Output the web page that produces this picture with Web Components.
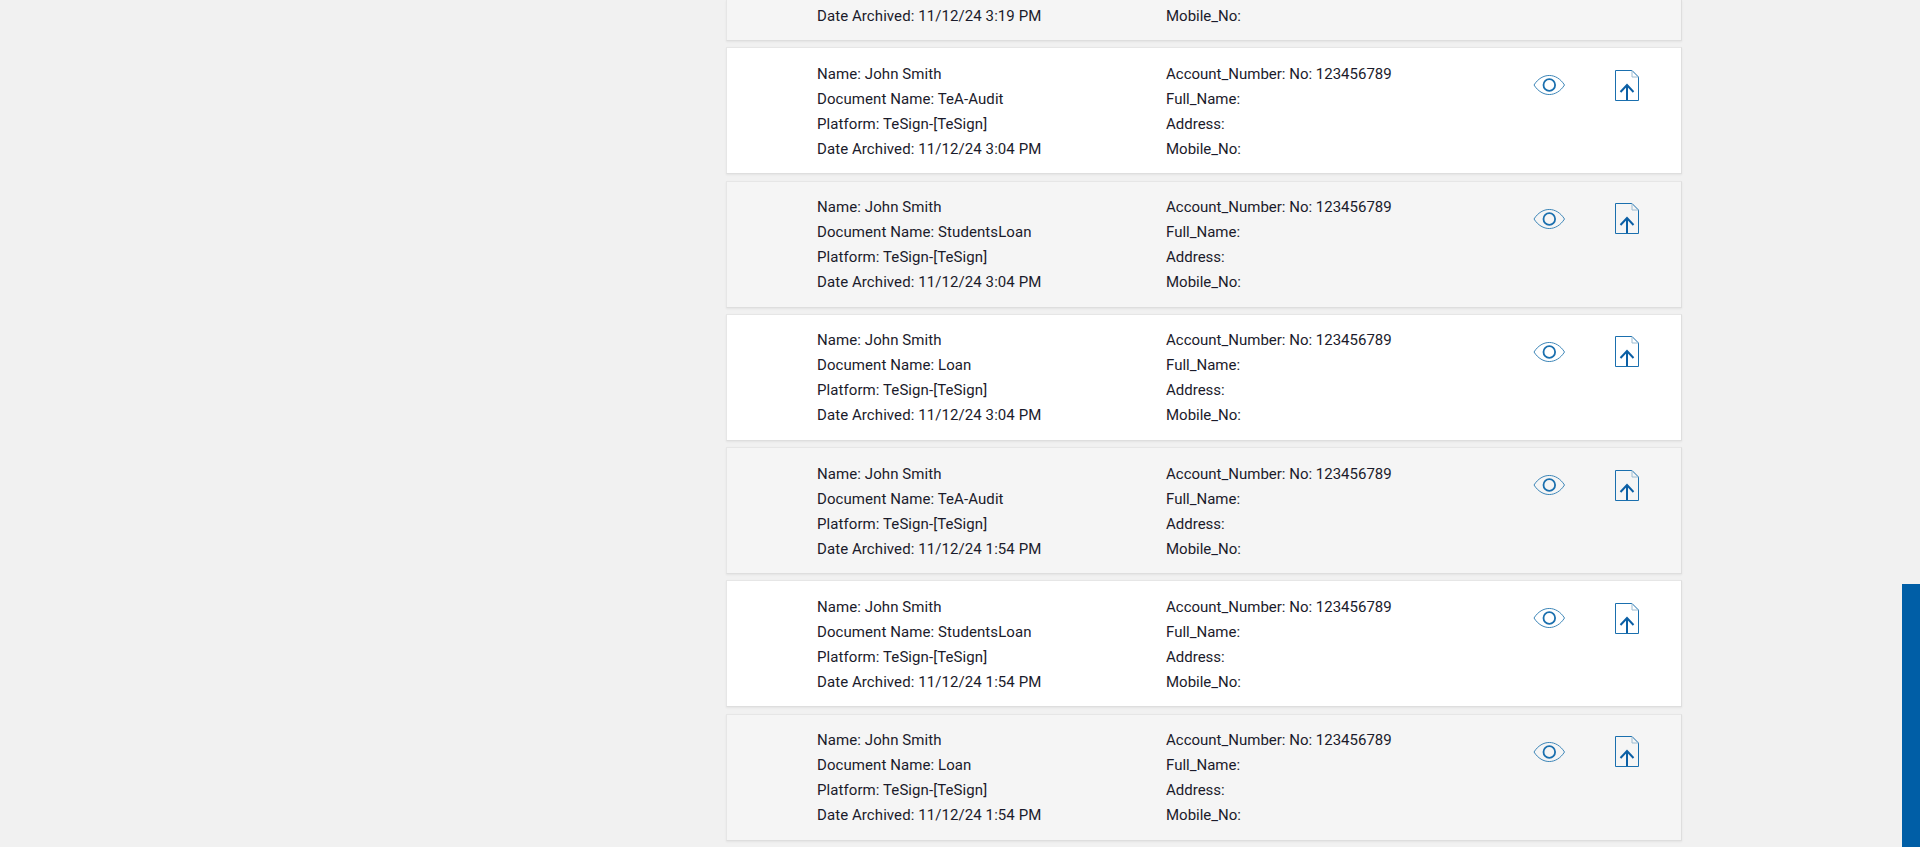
<!DOCTYPE html>
<html>
<head>
<meta charset="utf-8">
<style>
  html, body { margin: 0; height: 100%; overflow: hidden; background: #f1f1f1; }
</style>
</head>
<body>
<archive-page>
  <archive-card tail striped date="11/12/24 3:19 PM"></archive-card>
  <archive-card doc="TeA-Audit" date="11/12/24 3:04 PM"></archive-card>
  <archive-card striped doc="StudentsLoan" date="11/12/24 3:04 PM"></archive-card>
  <archive-card doc="Loan" date="11/12/24 3:04 PM"></archive-card>
  <archive-card striped doc="TeA-Audit" date="11/12/24 1:54 PM"></archive-card>
  <archive-card doc="StudentsLoan" date="11/12/24 1:54 PM"></archive-card>
  <archive-card striped doc="Loan" date="11/12/24 1:54 PM"></archive-card>
</archive-page>
<script>
const pageTmpl = document.createElement("template");
pageTmpl.innerHTML = `
<style>
:host {
  display: block;
  height: 847px;
  overflow: hidden;
  position: relative;
  font-family: Roboto, "Liberation Sans", sans-serif;
  font-size: 15px;
  color: #1b1b2b;
}
.list {
  width: 956px;
  margin-left: 726px;
  display: flex;
  flex-direction: column;
  gap: 6.3px;
}
/* scrollbar thumb sits over the page */
.thumb {
  position: absolute;
  right: 0;
  top: 584px;
  bottom: 0;
  width: 18px;
  background: #005ea6;
}
</style>
<div class="list"><slot></slot></div>
<div class="thumb"></div>`;

class ArchivePage extends HTMLElement {
  constructor() {
    super();
    this.attachShadow({ mode: "open" }).appendChild(pageTmpl.content.cloneNode(true));
  }
}
customElements.define("archive-page", ArchivePage);

const cardTmpl = document.createElement("template");
cardTmpl.innerHTML = `
<style>
:host {
  display: grid;
  grid-template-columns: 349px 348px 99px 1fr;
  height: 127px;
  box-sizing: border-box;
  padding-left: 90px;
  background: #fff;
  border: 1px solid #e6e6e6;
  border-bottom-color: #dedede;
  border-right-color: #dedede;
  box-shadow: 0 1px 2px rgba(0, 0, 0, .06);
  line-height: 25px;
}
:host([striped]) { background: #f5f5f5; }
/* the card scrolled past the top: only its last row is still on screen */
:host([tail]) {
  height: 41px;
  border-top: 0;
}
:host([tail]) .head, :host([tail]) .icon { display: none; }
:host([tail]) .col { padding-top: 4px; }
.col { padding-top: 13.4px; }
.col div { white-space: nowrap; }
.col.left { letter-spacing: .08px; }
.eye { padding: 26px 0 0 19px; }
.doc { padding: 20.6px 0 0 1px; }
svg { display: block; }
</style>
<div class="col left">
  <div class="head">Name: John Smith</div>
  <div class="head">Document Name: <span id="doc"></span></div>
  <div class="head">Platform: TeSign-[TeSign]</div>
  <div>Date Archived: <span id="date"></span></div>
</div>
<div class="col">
  <div class="head">Account_Number: No: 123456789</div>
  <div class="head">Full_Name:</div>
  <div class="head">Address:</div>
  <div>Mobile_No:</div>
</div>
<div class="icon eye">
  <svg width="33" height="22" viewBox="0 0 33 22" fill="none" stroke="#1a6fae">
    <path d="M1 11C9 -1.7 23.5 -1.7 31.5 11C23.5 23.7 9 23.7 1 11Z" stroke-width="1" stroke="#3d86b8"/>
    <circle cx="16.3" cy="11" r="5.8" stroke-width="1.8"/>
  </svg>
</div>
<div class="icon doc">
  <svg width="26" height="32" viewBox="0 0 26 32" fill="none" stroke="#1a6fae">
    <path d="M1.5 1.5H18L24.5 8V31.5H1.5Z" stroke-width="1"/>
    <path d="M18 1.5V8H24.5" stroke="#9cbcd2" stroke-width="1"/>
    <path d="M13 31V16.5M6.5 23L13 16L19.5 23" stroke="#0b5fa5" stroke-width="2"/>
  </svg>
</div>`;

class ArchiveCard extends HTMLElement {
  constructor() {
    super();
    this.attachShadow({ mode: "open" }).appendChild(cardTmpl.content.cloneNode(true));
  }

  connectedCallback() {
    this.shadowRoot.getElementById("doc").textContent = this.getAttribute("doc");
    this.shadowRoot.getElementById("date").textContent = this.getAttribute("date");
  }
}
customElements.define("archive-card", ArchiveCard);
</script>
</body>
</html>
